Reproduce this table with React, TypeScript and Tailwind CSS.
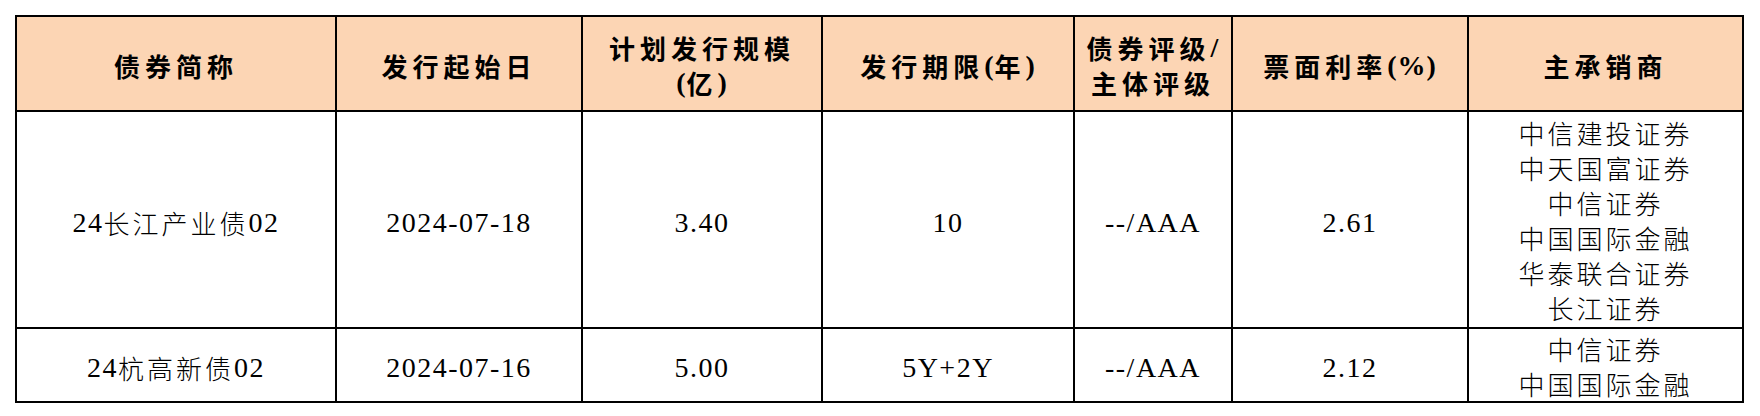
import React from "react";

type Bond = {
  name: string;
  start: string;
  size: string;
  term: string;
  rating: string;
  coupon: string;
  underwriters: string[];
};

const bonds: Bond[] = [
  {
    name: "24长江产业债02",
    start: "2024-07-18",
    size: "3.40",
    term: "10",
    rating: "--/AAA",
    coupon: "2.61",
    underwriters: ["中信建投证券", "中天国富证券", "中信证券", "中国国际金融", "华泰联合证券", "长江证券"],
  },
  {
    name: "24杭高新债02",
    start: "2024-07-16",
    size: "5.00",
    term: "5Y+2Y",
    rating: "--/AAA",
    coupon: "2.12",
    underwriters: ["中信证券", "中国国际金融"],
  },
];

// 半角字符用衬线字体，中文用黑体，模拟宋体里中西文混排的宽度
function Mixed({ text, head = false }: { text: string; head?: boolean }) {
  const parts = text.match(/[\x00-\x7f]+|[^\x00-\x7f]+/g) ?? [];
  return (
    <>
      {parts.map((p, i) =>
        /^[\x00-\x7f]/.test(p) ? (
          <span
            key={i}
            className={
              head
                ? "font-['Liberation_Serif',serif] text-[28px] font-bold tracking-[1px]"
                : "font-['Liberation_Serif',serif] text-[28px] tracking-[1.5px]"
            }
          >
            {p}
          </span>
        ) : (
          <span
            key={i}
            className={
              head
                ? "font-['Noto_Sans_CJK_SC',sans-serif] text-[26px] font-bold tracking-[5px]"
                : "font-['Noto_Sans_CJK_SC',sans-serif] text-[26px] font-light tracking-[3px]"
            }
          >
            {p}
          </span>
        )
      )}
    </>
  );
}

function Line({ text, head = false, h }: { text: string; head?: boolean; h: string }) {
  return (
    <div className={`flex items-center justify-center overflow-visible whitespace-nowrap leading-none ${h}`}>
      <Mixed text={text} head={head} />
    </div>
  );
}

const headers = [
  ["债券简称"],
  ["发行起始日"],
  ["计划发行规模", "(亿)"],
  ["发行期限(年)"],
  ["债券评级/", "主体评级"],
  ["票面利率(%)"],
  ["主承销商"],
];

const widths = ["w-[320px]", "w-[246px]", "w-[240px]", "w-[252px]", "w-[158px]", "w-[236px]", "w-[275px]"];

export default function App() {
  return (
    <div className="min-h-screen w-[1760px] bg-white pl-[15px] pt-[15px] text-black">
      <table className="w-[1729px] table-fixed border-collapse">
        <colgroup>
          {widths.map((w, i) => (
            <col key={i} className={w} />
          ))}
        </colgroup>
        <thead>
          <tr className="h-[95px] bg-[#fcd5b4]">
            {headers.map((lines, i) => (
              <th key={i} className="border-2 border-black p-0 pt-[4px] align-middle">
                {lines.map((l, j) => (
                  <Line key={j} text={l} head h="h-[35px]" />
                ))}
              </th>
            ))}
          </tr>
        </thead>
        <tbody>
          {bonds.map((b, i) => (
            <tr key={b.name} className={i === 0 ? "h-[217px]" : "h-[72px]"}>
              {[b.name, b.start, b.size, b.term, b.rating, b.coupon].map((v, j) => (
                <td key={j} className="border-2 border-black p-0 pt-[6px] align-middle">
                  <Line text={v} h="h-[35px]" />
                </td>
              ))}
              <td className="border-2 border-black p-0 pt-[2px] align-middle">
                {b.underwriters.map((u) => (
                  <Line key={u} text={u} h="h-[35px]" />
                ))}
              </td>
            </tr>
          ))}
        </tbody>
      </table>
    </div>
  );
}
